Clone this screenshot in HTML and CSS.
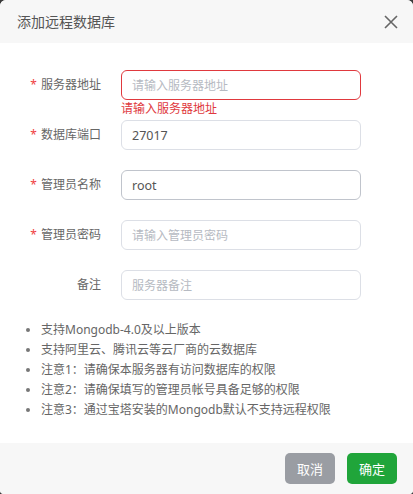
FILE: index.html
```html
<!DOCTYPE html>
<html lang="zh-CN">
<head>
<meta charset="utf-8">
<title>添加远程数据库</title>
<link rel="stylesheet" href="styles.css">
</head>
<body>
<div class="dialog">
  <div class="dialog-header">
    <span class="dialog-title">添加远程数据库</span>
    <button class="close" aria-label="关闭">
      <svg width="14" height="14" viewBox="0 0 14 14"><path d="M1 1 L13 13 M13 1 L1 13" stroke="#666" stroke-width="1.6" fill="none"/></svg>
    </button>
  </div>
  <div class="dialog-body">
    <form class="form">
      <div class="row">
        <label class="label required">服务器地址</label>
        <div class="field">
          <input class="input error" placeholder="请输入服务器地址">
          <div class="error-msg">请输入服务器地址</div>
        </div>
      </div>
      <div class="row">
        <label class="label required">数据库端口</label>
        <div class="field"><input class="input" value="27017"></div>
      </div>
      <div class="row">
        <label class="label required">管理员名称</label>
        <div class="field"><input class="input hover" value="root"></div>
      </div>
      <div class="row">
        <label class="label required">管理员密码</label>
        <div class="field"><input class="input" placeholder="请输入管理员密码"></div>
      </div>
      <div class="row">
        <label class="label">备注</label>
        <div class="field"><input class="input" placeholder="服务器备注"></div>
      </div>
    </form>
    <ul class="tips">
      <li>支持Mongodb-4.0及以上版本</li>
      <li>支持阿里云、腾讯云等云厂商的云数据库</li>
      <li>注意1：请确保本服务器有访问数据库的权限</li>
      <li>注意2：请确保填写的管理员帐号具备足够的权限</li>
      <li>注意3：通过宝塔安装的Mongodb默认不支持远程权限</li>
    </ul>
  </div>
  <div class="dialog-footer">
    <button class="btn btn-cancel">取消</button>
    <button class="btn btn-ok">确定</button>
  </div>
</div>
</body>
</html>
```
FILE: styles.css
```css
html, body {
  margin: 0;
  padding: 0;
  height: 100%;
}
body {
  background: #3a3a3a;
  font-family: "Noto Sans", "Noto Sans CJK SC", sans-serif;
}
.dialog {
  width: 413px;
  height: 494px;
  background: #fff;
  border-radius: 6px 6px 4px 4px;
  overflow: hidden;
  display: flex;
  flex-direction: column;
}
.dialog-header {
  height: 43px;
  background: #f7f7f7;
  display: flex;
  align-items: center;
  justify-content: space-between;
  padding: 0 14px 0 17px;
  flex-shrink: 0;
}
.dialog-title {
  font-size: 14px;
  color: #555;
  line-height: 20px;
}
.close {
  border: 0;
  background: none;
  padding: 0;
  width: 16px;
  height: 16px;
  display: flex;
  align-items: center;
  justify-content: center;
  cursor: pointer;
}
.dialog-body {
  flex: 1;
  padding: 27px 0 0 0;
}
.form {
  display: flex;
  flex-direction: column;
  gap: 20px;
}
.row {
  display: flex;
  align-items: center;
  height: 30px;
}
.label {
  width: 121px;
  padding-right: 20px;
  box-sizing: border-box;
  text-align: right;
  font-size: 12px;
  color: #666;
  line-height: 16px;
  flex-shrink: 0;
}
.label.required::before {
  content: "*";
  color: #f04040;
  margin-right: 4px;
}
.field {
  position: relative;
}
.input {
  width: 240px;
  height: 30px;
  box-sizing: border-box;
  border: 1px solid #dcdfe6;
  border-radius: 6px;
  padding: 0 10px;
  font-family: inherit;
  font-size: 12.5px;
  color: #555;
  outline: none;
  background: #fff;
}
.input::placeholder {
  color: #b6bac2;
  font-size: 12px;
}
.input.hover {
  border-color: #c0c4cc;
}
.input.error {
  border-color: #e0393e;
}
.error-msg {
  position: absolute;
  left: 0;
  top: 31px;
  font-size: 12px;
  line-height: 16px;
  color: #e0393e;
  white-space: nowrap;
}
.tips {
  margin: 20px 0 0 0;
  padding: 0 0 0 41px;
  font-size: 12px;
  line-height: 20px;
  color: #666;
}
.tips li::marker {
  color: #777;
  font-size: 11px;
}
.dialog-footer {
  height: 51px;
  background: #f7f7f7;
  display: flex;
  align-items: center;
  justify-content: flex-end;
  gap: 12px;
  padding: 0 16px 0 0;
  flex-shrink: 0;
}
.btn {
  height: 31px;
  width: 50px;
  border: 0;
  border-radius: 5px;
  color: #fff;
  font-family: inherit;
  font-size: 13px;
  padding: 0;
  cursor: pointer;
}
.btn-cancel {
  background: #9a9da3;
}
.btn-ok {
  background: #20a53a;
}
```
